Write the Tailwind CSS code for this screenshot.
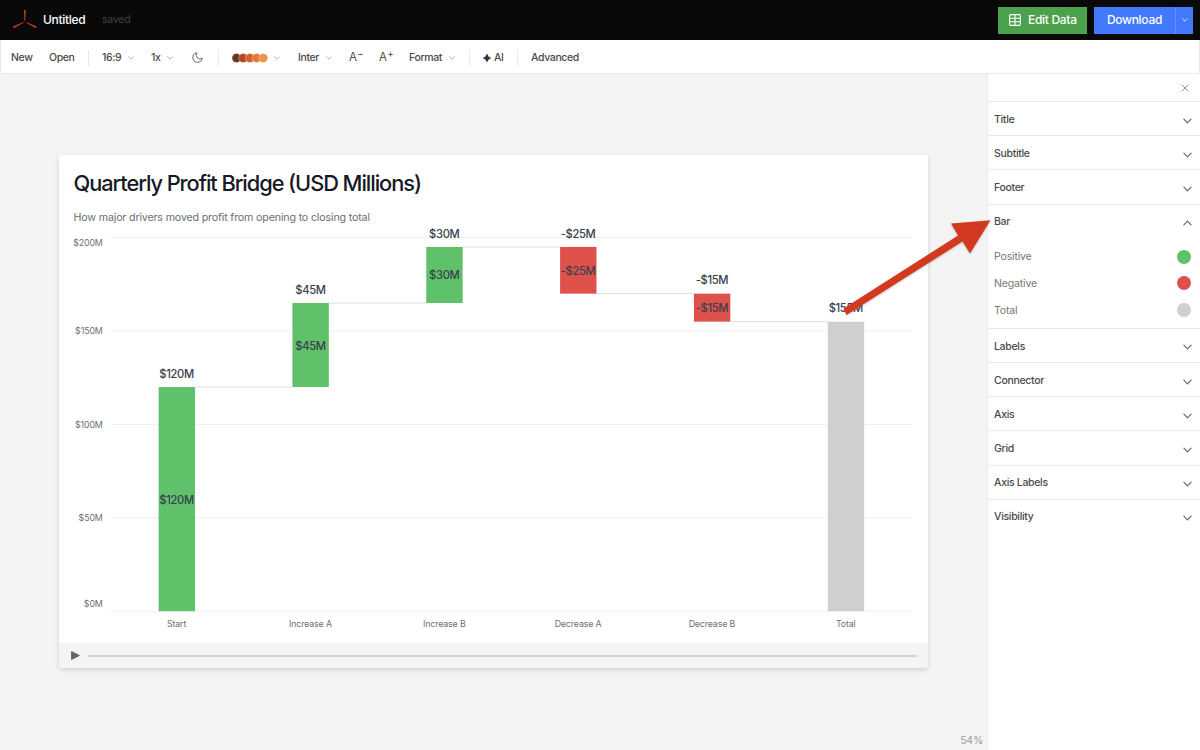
<!DOCTYPE html>
<html lang="en" class="h-full">
  <head>
    <meta charset="UTF-8" />
    <meta name="viewport" content="width=device-width, initial-scale=1.0" />
    <title>Untitled</title>
    <script src="https://cdn.jsdelivr.net/npm/@tailwindcss/browser@4"></script>
  </head>
  <body class="flex h-[750px] w-[1200px] flex-col overflow-hidden bg-white font-['Inter',sans-serif] text-[#4a4a4a]">
    <!-- Shared icons -->
    <svg class="hidden">
      <symbol id="chevron" viewBox="0 0 10 6">
        <path d="M1 1l4 4 4-4" fill="none" stroke="currentColor" stroke-width="1.3" stroke-linecap="round" stroke-linejoin="round" />
      </symbol>
    </svg>

    <!-- Top bar -->
    <header class="flex h-10 shrink-0 items-center bg-[#090909] pr-[7px] pl-3">
      <svg class="h-6 w-[26px]" viewBox="0 0 26 24">
        <path d="M12 2h1.8l-.6 11h-.8zM12 14.5l-10.3 5.800-.7-1.900 10.600-4.500zM14 14.500l9.900 5.800.7-1.900-10.200-4.500z" fill="#c93d1c" />
      </svg>
      <h1 class="ml-[5px] w-[59px] text-[12px] font-medium tracking-[-0.025em] text-white">Untitled</h1>
      <span class="text-[10.5px] tracking-[-0.02em] text-[#414141]">saved</span>
      <button class="ml-auto flex h-[27px] w-[89px] items-center bg-[#4ca14c] pl-[11px] text-[12px] font-medium text-white">
        <svg class="mr-[7px] h-3 w-3 shrink-0" viewBox="0 0 12 12" fill="none" stroke="currentColor" stroke-width="1.1">
          <rect x=".6" y=".6" width="10.800" height="10.800" rx="1.400" />
          <path d="M.6 4.200h10.800M.6 7.800h10.800M6 .6v10.800" />
        </svg>
        <span class="tracking-[-0.025em] whitespace-nowrap">Edit Data</span>
      </button>
      <div class="ml-[7px] flex h-[27px] w-[99px] bg-[#4379fc] text-white">
        <button class="w-[82px] border-r border-[#6390fd] text-[12px] font-medium tracking-[-0.025em]">Download</button>
        <button class="flex w-[17px] items-center justify-center"><svg class="h-[4px] w-[6px]"><use href="#chevron" /></svg></button>
      </div>
    </header>

    <!-- Toolbar -->
    <nav class="flex h-[34px] shrink-0 items-center border-x border-b border-[#e9e9e9] bg-white pt-[2px] pl-2.5 text-[10.5px] font-medium tracking-[-0.035em] whitespace-nowrap">
      <button class="w-[38px] text-left">New</button>
      <button class="w-[39px] text-left">Open</button>
      <span class="h-4 w-px bg-[#e8e8e8]"></span>
      <button class="ml-[13px] flex w-[49px] items-center"><span class="w-[26px] text-left">16:9</span><svg class="h-[4px] w-[6px] text-[#999]"><use href="#chevron" /></svg></button>
      <button class="flex w-[41px] items-center"><span class="w-4 text-left">1x</span><svg class="h-[4px] w-[6px] text-[#999]"><use href="#chevron" /></svg></button>
      <svg class="h-[11px] w-[11px]" viewBox="0 0 11 11" fill="none" stroke="#666" stroke-width="1" stroke-linejoin="round">
        <path d="M5 .9a4.700 4.700 0 1 0 5.200 5.200A3.700 3.700 0 0 1 5 .9z" />
      </svg>
      <span class="ml-[15px] h-4 w-px bg-[#e8e8e8]"></span>
      <button class="ml-[13px] flex w-[66px] items-center">
        <svg class="mr-1.5 h-2.5 w-9" viewBox="0 0 36 10" stroke="#fff" stroke-width=".3">
          <circle cx="4.500" cy="5" r="4.500" fill="#6b3420" />
          <circle cx="11.200" cy="5" r="4.500" fill="#b5472a" />
          <circle cx="17.900" cy="5" r="4.500" fill="#d3622d" />
          <circle cx="24.600" cy="5" r="4.500" fill="#e07a35" />
          <circle cx="31.300" cy="5" r="4.500" fill="#ed9350" />
        </svg>
        <svg class="h-[4px] w-[6px] text-[#999]"><use href="#chevron" /></svg>
      </button>
      <button class="flex w-[51px] items-center"><span class="w-7 text-left">Inter</span><svg class="h-[4px] w-[6px] text-[#999]"><use href="#chevron" /></svg></button>
      <button class="flex w-[30px] items-center"><span class="text-[11.5px] font-normal">A</span><span class="mb-[8px] ml-px text-[9px] leading-none">−</span></button>
      <button class="flex w-[30px] items-center"><span class="text-[11.5px] font-normal">A</span><span class="mb-[8px] ml-px text-[9px] leading-none">+</span></button>
      <button class="flex w-[60px] items-center"><span class="w-10 text-left">Format</span><svg class="h-[4px] w-[6px] text-[#999]"><use href="#chevron" /></svg></button>
      <span class="h-4 w-px bg-[#e8e8e8]"></span>
      <button class="ml-[13px] flex w-[34px] items-center">
        <svg class="mr-[3px] h-2 w-2" viewBox="0 0 8 8"><path d="M4 0Q4.900 3.100 8 4 4.900 4.900 4 8 3.100 4.900 0 4 3.100 3.100 4 0z" fill="#333" stroke="#333" stroke-width=".4" /></svg>AI
      </button>
      <span class="h-4 w-px bg-[#e8e8e8]"></span>
      <button class="ml-[13px]">Advanced</button>
    </nav>

    <div class="relative flex min-h-0 flex-1">
      <!-- Canvas -->
      <main class="relative w-[987px] shrink-0 bg-[#f4f4f4] pt-[81px] pl-[59px]">
        <section class="w-[869px] rounded-[3px] shadow-[0_2px_5px_rgba(0,0,0,0.14)]">
          <svg id="chart" class="block h-[488px] w-[869px] rounded-t-[3px] bg-white" viewBox="59 155 869 488">
            <text x="73.500" y="191.300" font-size="21.800" font-weight="500" fill="#171925" textLength="348.500">Quarterly Profit Bridge (USD Millions)</text>
            <text x="73.500" y="221" font-size="10.700" fill="#6b6f76" textLength="296.500">How major drivers moved profit from opening to closing total</text>
          </svg>
          <div class="flex h-[25px] items-center rounded-b-[3px] bg-[#f4f4f4] pl-3">
            <svg class="h-[9px] w-[9px]" viewBox="0 0 9 9"><path d="M.6 .6v7.800L8.400 4.500z" fill="#666" stroke="#666" stroke-linejoin="round" /></svg>
            <div class="ml-2 h-[2px] w-[829px] rounded-full bg-[#d2d2d2]"></div>
          </div>
        </section>
        <span class="absolute right-1 bottom-[2px] text-[10.5px] leading-[14px] tracking-[-0.02em] text-[#999]">54%</span>
      </main>

      <!-- Settings panel -->
      <aside class="flex-1 border-l border-[#ececec] bg-white text-[10.5px] font-medium tracking-[-0.03em]">
        <div class="flex h-7 items-center justify-end border-b border-[#e8e8e8] pr-[11px]">
          <svg class="h-2 w-2" viewBox="0 0 8 8"><path d="M.7.7l6.600 6.600M7.300.7L.7 7.300" stroke="#999" /></svg>
        </div>
        <div id="sections"></div>
      </aside>

      <!-- Pointer arrow -->
      <svg class="pointer-events-none absolute top-0 left-0 h-[676px] w-[1200px] drop-shadow-[0_1px_1px_rgba(0,0,0,0.2)]" viewBox="0 74 1200 676">
        <path d="M990.500 220.300L951 223.500L958 235.500L843.500 308.500L846.500 315L962.500 241.500L970 253.500z" fill="#d23a1f" />
      </svg>
    </div>

    <script>
      const GREEN = '#5fc26b';
      const RED = '#df524c';
      const GRAY = '#cfcfcf';
      const BASE_Y = 611.2;
      const PX_PER_M = 1.868;

      const bars = [
        { name: 'Start', label: '$120M', from: 0, to: 120, color: GREEN },
        { name: 'Increase A', label: '$45M', from: 120, to: 165, color: GREEN },
        { name: 'Increase B', label: '$30M', from: 165, to: 195, color: GREEN },
        { name: 'Decrease A', label: '-$25M', from: 195, to: 170, color: RED },
        { name: 'Decrease B', label: '-$15M', from: 170, to: 155, color: RED },
        { name: 'Total', label: '$155M', from: 0, to: 155, color: GRAY },
      ];

      const y = (v) => BASE_Y - v * PX_PER_M;

      function drawChart() {
        let out = '';
        const ticks = [[0, 607.4], [50, 521.2], [100, 427.9], [150, 334.3], [200, 246.3]];
        ticks.forEach(([v, ty]) => {
          out += `<line x1="111" x2="912" y1="${y(v)}" y2="${y(v)}" stroke="#f0f0f0" />`;
          out += `<text x="102.7" y="${ty}" text-anchor="end" font-size="8.8" letter-spacing="-0.1" fill="#6b6f76">$${v}M</text>`;
        });
        bars.forEach((b, i) => {
          const cx = 176.8 + i * 133.83;
          const top = y(Math.max(b.from, b.to));
          const height = Math.abs(b.to - b.from) * PX_PER_M;
          if (i < bars.length - 1) {
            out += `<line x1="${cx + 18}" x2="${cx + 116}" y1="${y(b.to)}" y2="${y(b.to)}" stroke="#dedede" />`;
          }
          out += `<rect x="${cx - 18.2}" y="${top}" width="36.4" height="${height}" fill="${b.color}" />`;
          out += `<text x="${cx - 0.2}" y="${top - 9.4}" text-anchor="middle" font-size="11.2" letter-spacing="-0.35" font-weight="500" fill="#3a404c">${b.label}</text>`;
          if (b.name !== 'Total') {
            out += `<text x="${cx - 0.2}" y="${top + height / 2 + 4.5}" text-anchor="middle" font-size="11.2" letter-spacing="-0.35" font-weight="500" fill="#3a404c">${b.label}</text>`;
          }
          out += `<text x="${cx - 0.2}" y="626.7" text-anchor="middle" font-size="8.8" letter-spacing="-0.13" fill="#6b6f76">${b.name}</text>`;
        });
        document.getElementById('chart').innerHTML += out;
      }

      function drawSections() {
        const names = ['Title', 'Subtitle', 'Footer', 'Bar', 'Labels', 'Connector', 'Axis', 'Grid', 'Axis Labels', 'Visibility'];
        const swatches = [['Positive', GREEN], ['Negative', '#dc514c'], ['Total', GRAY]];
        document.getElementById('sections').innerHTML = names
          .map((name) => {
            const open = name === 'Bar';
            const line = name === 'Visibility' ? '' : 'border-b border-[#e8e8e8]';
            const rows = swatches
              .map(([label, color]) => `
                <div class="flex h-[26.700px] items-center justify-between pr-[9px] pl-1.5 font-normal text-[#777]">
                  <span class="pt-px tracking-[-0.015em]">${label}</span><span class="h-3.5 w-3.5 rounded-full" style="background:${color}"></span>
                </div>`)
              .join('');
            return `
              <div class="${line}">
                <div class="flex h-[33.200px] items-center justify-between pr-[8px] pl-1.5">
                  <span class="pt-[2px]">${name}</span><svg class="mt-[4px] h-[6px] w-[9px] text-[#666] ${open ? 'rotate-180' : ''}"><use href="#chevron" /></svg>
                </div>
                ${open ? `<div class="pt-[5.500px] pb-[4.500px]">${rows}</div>` : ''}
              </div>`;
          })
          .join('');
      }

      drawChart();
      drawSections();
    </script>
  </body>
</html>
